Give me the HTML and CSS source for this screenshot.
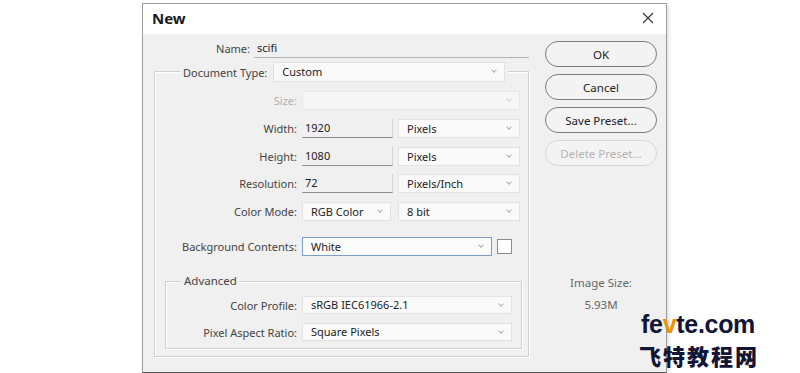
FILE: index.html
```html
<!DOCTYPE html>
<html lang="en">
<head>
    <meta charset="UTF-8">
    <meta name="viewport" content="width=device-width, initial-scale=1.0">
    <title>New Document</title>
    <link rel="stylesheet" href="styles.css">
</head>
<body>

    <!-- New document dialog -->
    <div class="dialog">
        <div class="titlebar">
            <span class="title">New</span>
            <svg class="close" width="12" height="12" viewBox="0 0 12 12">
                <path d="M1 1 L11 11 M11 1 L1 11" stroke="#333" stroke-width="1.1" fill="none"/>
            </svg>
        </div>

        <div class="content">
            <div class="form">
                <div class="name-row">
                    <span class="name-label">Name:</span>
                    <div class="name-input">scifi</div>
                </div>

                <!-- Document type group -->
                <div class="group">
                    <div class="group-head">
                        <span class="head-label">Document Type:</span>
                        <div class="dropdown doc-type">Custom</div>
                    </div>

                    <div class="row disabled">
                        <span class="label">Size:</span>
                        <div class="dropdown wide"></div>
                    </div>
                    <div class="row">
                        <span class="label">Width:</span>
                        <div class="text-input">1920</div>
                        <div class="dropdown unit">Pixels</div>
                    </div>
                    <div class="row">
                        <span class="label">Height:</span>
                        <div class="text-input">1080</div>
                        <div class="dropdown unit">Pixels</div>
                    </div>
                    <div class="row">
                        <span class="label">Resolution:</span>
                        <div class="text-input">72</div>
                        <div class="dropdown unit">Pixels/Inch</div>
                    </div>
                    <div class="row">
                        <span class="label">Color Mode:</span>
                        <div class="dropdown mode">RGB Color</div>
                        <div class="dropdown unit">8 bit</div>
                    </div>
                    <div class="row bg-row">
                        <span class="label">Background Contents:</span>
                        <div class="dropdown focused">White</div>
                        <div class="swatch"></div>
                    </div>

                    <!-- Advanced group -->
                    <div class="advanced">
                        <div class="legend">Advanced</div>
                        <div class="row adv-row">
                            <span class="label">Color Profile:</span>
                            <div class="dropdown profile">sRGB IEC61966-2.1</div>
                        </div>
                        <div class="row adv-row">
                            <span class="label">Pixel Aspect Ratio:</span>
                            <div class="dropdown profile">Square Pixels</div>
                        </div>
                    </div>
                </div>
            </div>

            <div class="side">
                <button class="btn">OK</button>
                <button class="btn">Cancel</button>
                <button class="btn">Save Preset...</button>
                <button class="btn" disabled>Delete Preset...</button>
                <div class="size-label">Image Size:</div>
                <div class="size-value">5.93M</div>
            </div>
        </div>
    </div>

    <!-- site watermark over the corner -->
    <div class="watermark">
        <div class="wm-site">fe<span class="wm-v">v</span>te.com</div>
        <div class="wm-cn">飞特教程网</div>
    </div>

</body>
</html>
```

FILE: styles.css
```css
/* Photoshop-like "New" dialog */
body {
    margin: 0;
    width: 800px;
    height: 373px;
    overflow: hidden;
    position: relative;
    background-color: #ffffff;
    font-family: "Noto Sans", "Liberation Sans", sans-serif;
    font-size: 11px;
    color: #333;
}

.dialog {
    box-sizing: border-box;
    width: 525px;
    height: 370px;
    margin: 3px 0 0 142px;
    border: 1px solid #9c9c9c;
    border-bottom-color: #555;
    background-color: #f0f0f0;
    box-shadow: 2px 2px 4px rgba(0, 0, 0, 0.12);
    display: flex;
    flex-direction: column;
}

.titlebar {
    box-sizing: border-box;
    height: 30px;
    background-color: #ffffff;
    display: flex;
    align-items: center;
    justify-content: space-between;
    padding: 0 10px 2px 9px;
}

.title {
    font-size: 15px;
    font-weight: bold;
    color: #1a1a1a;
}

.close {
    margin-right: 2px;
}

.content {
    display: flex;
    flex: 1;
}

.form {
    width: 386px;
}

/* name field */
.name-row {
    display: flex;
    align-items: center;
    height: 20px;
    margin-top: 4px;
}

.name-label {
    width: 107px;
    text-align: right;
    color: #444;
}

.name-input {
    box-sizing: border-box;
    width: 275px;
    height: 20px;
    margin-left: 4px;
    padding-left: 3px;
    line-height: 19px;
    border-bottom: 1px solid #b4b4b4;
    color: #222;
}

/* group boxes */
.group {
    box-sizing: border-box;
    width: 375px;
    margin: 13px 0 0 11px;
    border: 1px solid #cfcfcf;
    box-shadow: inset 1px 1px 0 #fff, 1px 1px 0 #fff;
    padding-bottom: 7px;
}

.group-head {
    display: flex;
    align-items: center;
    gap: 6px;
    width: max-content;
    height: 20px;
    margin: -10px 0 0 25px;
    padding: 0 3px;
    background-color: #f0f0f0;
}

.head-label {
    color: #444;
}

.row {
    display: flex;
    align-items: center;
    height: 19px;
    margin-top: 9px;
}

.row:nth-of-type(5) {
    margin-top: 8px;
}

.label {
    width: 142px;
    text-align: right;
    margin-right: 5px;
    color: #444;
}

.disabled .label {
    color: #b0b0b0;
}

/* dropdowns */
.dropdown {
    box-sizing: border-box;
    position: relative;
    height: 100%;
    padding-left: 8px;
    line-height: 17px;
    border: 1px solid #e2e2e2;
    background-color: #fafafa;
    color: #222;
}

.dropdown::after {
    content: "";
    position: absolute;
    right: 8px;
    top: 5px;
    width: 3px;
    height: 3px;
    border-right: 1px solid #b0b0b0;
    border-bottom: 1px solid #b0b0b0;
    transform: rotate(45deg);
}

.doc-type {
    width: 232px;
    height: 20px;
    line-height: 18px;
}

.wide {
    width: 218px;
}

.disabled .dropdown {
    background-color: #f6f6f6;
    border-color: #e8e8e8;
}

.disabled .dropdown::after {
    border-color: #d0d0d0;
}

.unit {
    width: 122px;
    margin-left: auto;
    margin-right: 8px;
}

.mode {
    width: 89px;
}

.text-input {
    box-sizing: border-box;
    width: 91px;
    height: 100%;
    padding-left: 3px;
    line-height: 17px;
    border-bottom: 1px solid #8f8f8f;
    border-right: 1px solid #d4d4d4;
    color: #222;
}

.bg-row {
    margin-top: 16px;
}

.focused {
    width: 190px;
    border-color: #7d9ec4;
    background-color: #fcfcfc;
}

.swatch {
    box-sizing: border-box;
    width: 15px;
    height: 15px;
    margin-left: 5px;
    border: 1px solid #8a8a8a;
    background-color: #ffffff;
}

/* advanced group */
.advanced {
    box-sizing: border-box;
    margin: 25px 6px 0 10px;
    border: 1px solid #cfcfcf;
    box-shadow: inset 1px 1px 0 #fff, 1px 1px 0 #fff;
    padding-bottom: 7px;
}

.legend {
    width: max-content;
    height: 16px;
    line-height: 16px;
    margin: -9px 0 0 15px;
    padding: 0 3px;
    background-color: #f0f0f0;
    color: #444;
    font-size: 11.5px;
}

.adv-row {
    height: 18px;
}

.advanced .legend + .adv-row {
    margin-top: 7px;
}

.adv-row .label {
    width: 131px;
}

.adv-row .dropdown {
    line-height: 16px;
}

.profile {
    width: 210px;
}

/* right column */
.side {
    width: 112px;
    margin-left: 16px;
    padding-top: 7px;
    display: flex;
    flex-direction: column;
    gap: 7px;
}

.btn {
    height: 26px;
    border: 1px solid #7c7c7c;
    border-radius: 13px;
    background-color: #f3f3f3;
    font-family: "Noto Sans", "Liberation Sans", sans-serif;
    font-size: 11.5px;
    color: #222;
    padding: 0;
    cursor: pointer;
}

.btn:disabled {
    border-color: #d8d8d8;
    color: #b4b4b4;
    cursor: default;
}

.size-label {
    margin-top: 102px;
    text-align: center;
    line-height: 16px;
    color: #666;
    font-size: 11.5px;
}

.size-value {
    margin-top: -1px;
    text-align: center;
    line-height: 16px;
    color: #666;
    font-size: 11.5px;
}

/* watermark */
.watermark {
    position: absolute;
    left: 639px;
    top: 311px;
}

.wm-site {
    font-family: "Liberation Sans", Arial, sans-serif;
    font-weight: bold;
    font-size: 25px;
    line-height: 26px;
    color: #121536;
    letter-spacing: -0.3px;
    padding-left: 2px;
}

.wm-v {
    color: #f29100;
}

.wm-cn {
    margin-top: 2px;
    font-family: "Noto Sans CJK SC", sans-serif;
    font-weight: 900;
    font-size: 22px;
    line-height: 32px;
    color: #121536;
    letter-spacing: 2px;
}
```
